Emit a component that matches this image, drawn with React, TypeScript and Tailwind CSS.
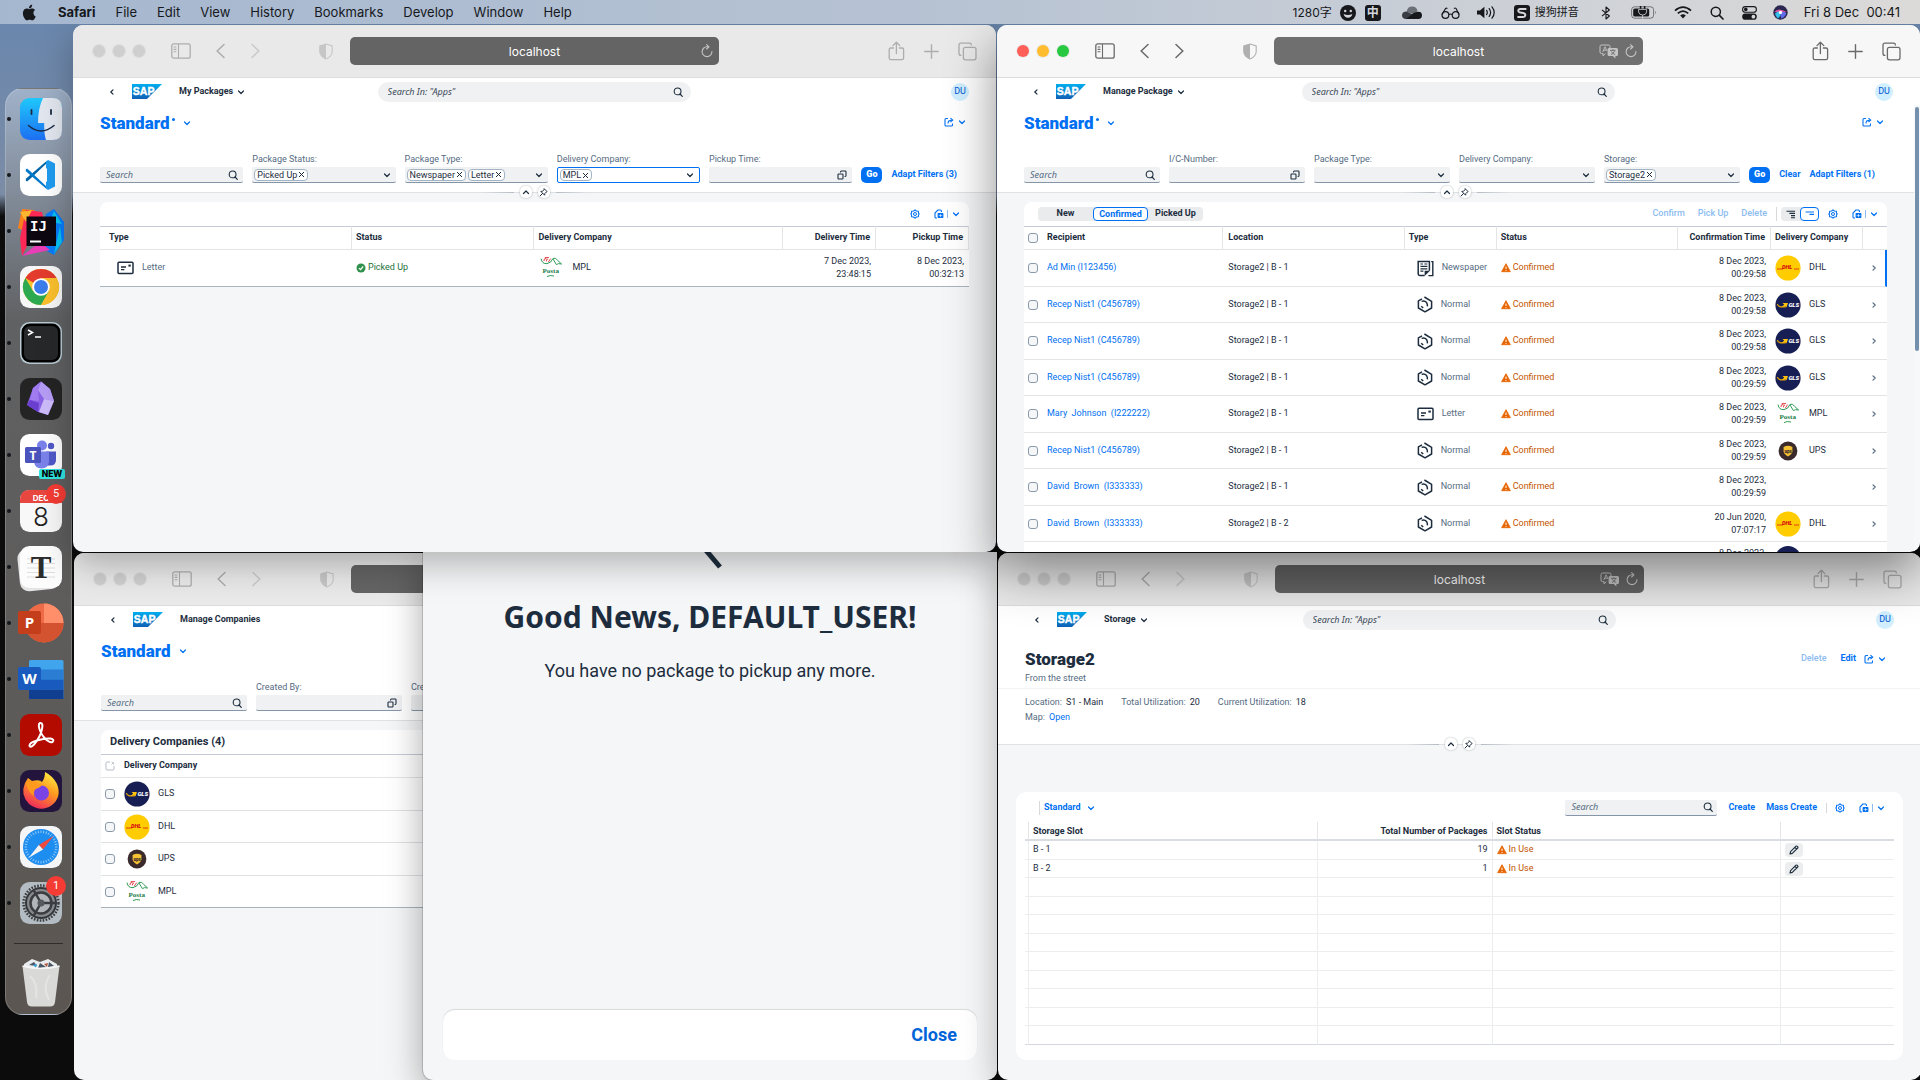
import React, { type ReactNode } from "react";

/* ------------------------------------------------------------------ */
/* Small line icons                                                    */
/* ------------------------------------------------------------------ */

type IconProps = { className?: string };

function Chevron({ className = "", dir = "down" }: IconProps & { dir?: "down" | "up" | "left" | "right" }) {
  const d = {
    down: "M1.5 3 L4 5.5 L6.5 3",
    up: "M1.5 5.5 L4 3 L6.5 5.5",
    left: "M5 1.8 L2.8 4 L5 6.2",
    right: "M3 1.8 L5.2 4 L3 6.2",
  }[dir];
  return (
    <svg viewBox="0 0 8 8" aria-hidden="true" className={"size-2 shrink-0 " + className}>
      <path d={d} fill="none" stroke="currentColor" strokeWidth="1.2" strokeLinecap="round" strokeLinejoin="round" />
    </svg>
  );
}

function SearchIcon({ className = "" }: IconProps) {
  return (
    <svg viewBox="0 0 10 10" aria-hidden="true" className={"size-2.5 shrink-0 " + className}>
      <circle cx="4.6" cy="4.4" r="3.4" fill="none" stroke="currentColor" strokeWidth="1.1" />
      <path d="M7 7 L9.3 9.3" stroke="currentColor" strokeWidth="1.2" strokeLinecap="round" />
    </svg>
  );
}

function ValueHelpIcon() {
  return (
    <svg viewBox="0 0 10 10" aria-hidden="true" className="size-2.5 shrink-0">
      <rect x="1" y="4" width="5" height="5" rx="0.8" fill="none" stroke="currentColor" strokeWidth="1.1" />
      <path d="M3.5 2.6 V2 Q3.5 1 4.5 1 H8.2 Q9 1 9 1.9 V5.6 Q9 6.5 8.2 6.5 H7.6" fill="none" stroke="currentColor" strokeWidth="1.1" />
    </svg>
  );
}

function PinIcon() {
  return (
    <svg viewBox="0 0 10 10" aria-hidden="true" className="size-[9px]">
      <path d="M6 1 L9 4 L8 4.6 L6.5 6.2 L6.2 8 L2 3.8 L3.9 3.5 L5.5 2 Z M4 6 L1.2 8.8" fill="none" stroke="currentColor" strokeWidth="1.1" strokeLinejoin="round" strokeLinecap="round" />
    </svg>
  );
}

function ShareIcon() {
  return (
    <svg viewBox="0 0 10 10" aria-hidden="true" className="size-2.5 shrink-0">
      <path d="M4 1.5 H2 Q1 1.5 1 2.5 V8 Q1 9 2 9 H7.5 Q8.5 9 8.5 8 V6.5" fill="none" stroke="currentColor" strokeWidth="1.1" />
      <path d="M4 6.5 Q4 3.2 7.5 3.2 M6.4 1.2 L8.8 3.2 L6.4 5.2" fill="none" stroke="currentColor" strokeWidth="1.1" strokeLinejoin="round" />
    </svg>
  );
}

function GearIcon() {
  return (
    <svg viewBox="0 0 10 10" aria-hidden="true" className="size-2.5 shrink-0">
      <path d="M5 0.8 L6.4 2 L8.4 2.2 L8.5 4.1 L9.2 5 L8.5 5.9 L8.4 7.8 L6.4 8 L5 9.2 L3.6 8 L1.6 7.8 L1.5 5.9 L0.8 5 L1.5 4.1 L1.6 2.2 L3.6 2 Z" fill="none" stroke="currentColor" strokeWidth="1.1" strokeLinejoin="round" />
      <circle cx="5" cy="5" r="1.5" fill="none" stroke="currentColor" strokeWidth="1" />
    </svg>
  );
}

function ExportIcon() {
  return (
    <svg viewBox="0 0 10 10" aria-hidden="true" className="size-2.5 shrink-0">
      <path d="M3 9 H2 Q1 9 1 8 V4 L3.8 1 H6.5 Q7.4 1 7.4 2 V3" fill="none" stroke="currentColor" strokeWidth="1.1" />
      <rect x="3.6" y="4" width="5.8" height="5" rx="0.8" fill="currentColor" />
      <path d="M6.5 5 V8.2 M4.6 6.6 H8.4" stroke="#fff" strokeWidth="0.6" />
    </svg>
  );
}

function WarningIcon() {
  return (
    <svg viewBox="0 0 10 10" aria-hidden="true" className="size-2.5 shrink-0">
      <path d="M5 0.7 L9.4 8.7 H0.6 Z" fill="#e76500" stroke="#e76500" strokeWidth="0.8" strokeLinejoin="round" />
      <path d="M5 3.6 V6 M5 7 V7.9" stroke="#fff" strokeWidth="1" />
    </svg>
  );
}

function CheckCircleIcon() {
  return (
    <svg viewBox="0 0 10 10" aria-hidden="true" className="size-2.5 shrink-0">
      <circle cx="5" cy="5" r="4.5" fill="#30914c" />
      <path d="M2.9 5.1 L4.5 6.6 L7.2 3.5" fill="none" stroke="#fff" strokeWidth="1.2" />
    </svg>
  );
}

function PencilIcon() {
  return (
    <svg viewBox="0 0 10 10" aria-hidden="true" className="size-2.5">
      <path d="M1 9 L1.6 6.6 L7 1.2 Q7.6 0.7 8.3 1.4 L8.7 1.8 Q9.3 2.4 8.7 3 L3.3 8.4 Z M6 2.4 L7.7 4.1" fill="none" stroke="currentColor" strokeWidth="1.1" strokeLinejoin="round" />
    </svg>
  );
}

/* ------------------------------------------------------------------ */
/* Package type icons and carrier logos                                */
/* ------------------------------------------------------------------ */

function TypeIcon({ type }: { type: string }) {
  if (type === "Letter")
    return (
      <svg viewBox="0 0 17 14" aria-hidden="true" className="h-3.5 w-[17px] shrink-0 text-[#1d2d3e]">
        <rect x="1" y="1.2" width="15" height="11.4" rx="1" fill="none" stroke="currentColor" strokeWidth="1.5" />
        <path d="M4 6 H9 M4 8.6 H7.4" stroke="currentColor" strokeWidth="1.3" />
        <rect x="11.4" y="3.6" width="2.4" height="2" fill="currentColor" />
      </svg>
    );
  if (type === "Newspaper")
    return (
      <svg viewBox="0 0 17 17" aria-hidden="true" className="size-[17px] shrink-0 text-[#1d2d3e]">
        <path d="M7.600 15.400 H2.600 Q1.200 15.400 1.200 14 V1.400 H12.400 V10.800" fill="none" stroke="currentColor" strokeWidth="1.500" />
        <path d="M7.600 16 V10.800 H13 Z" fill="currentColor" />
        <path d="M3.400 4 H6 M7.400 4 H10.400 M3.400 6.400 H10.400 M3.400 8.800 H10.400 M3.400 11.200 H6.400" stroke="currentColor" strokeWidth="1.200" />
        <path d="M14.200 1.600 H15.800 V15.600 H11.400" fill="none" stroke="currentColor" strokeWidth="1.400" />
      </svg>
    );
  return (
    <svg viewBox="0 0 16 17" aria-hidden="true" className="h-[17px] w-4 shrink-0 text-[#1d2d3e]">
      <path d="M5 2.800 L1.400 4.800 V12 L8 15.800 L14.600 12 V5.400 L7.400 1" fill="none" stroke="currentColor" strokeWidth="1.500" strokeLinejoin="round" />
      <path d="M4.600 5.400 Q7.400 4 9.600 6.600 Q10.600 8 10.400 10.400" fill="none" stroke="currentColor" strokeWidth="1.500" />
      <path d="M4.200 10.200 L6.200 12" stroke="currentColor" strokeWidth="1.500" />
    </svg>
  );
}

function CarrierLogo({ name }: { name: string }) {
  return (
    <svg viewBox="0 0 26 26" aria-hidden="true" className="size-[26px] shrink-0">
      {name === "GLS" && (
        <>
          <circle cx="13" cy="13" r="12.6" fill="#171e54" />
          <path d="M2.4 12 Q3 16 11 14.6" fill="none" stroke="#e7a500" strokeWidth="1.2" />
          <path d="M7.5 11 H13 L11.4 15.4 L10.6 14 L6.4 15.2 L9.2 12.6 Z" fill="#ffc20e" />
          <text x="13.4" y="15.4" fontFamily="Roboto" fontWeight="900" fontStyle="italic" fontSize="6" fill="#fff">GLS</text>
        </>
      )}
      {name === "DHL" && (
        <>
          <circle cx="13" cy="13" r="12.6" fill="#ffcc00" />
          <path d="M2 14 H8 M19 14 H24" stroke="#d40511" strokeWidth="0.7" />
          <text x="7" y="14.4" fontFamily="Roboto" fontWeight="900" fontStyle="italic" fontSize="5.600" fill="#d40511">DHL</text>
        </>
      )}
      {name === "UPS" && (
        <>
          <circle cx="13" cy="13" r="9.4" fill="#3b2a2c" />
          <path d="M8.6 9 Q13 6.4 17.4 9 V13.6 Q17.2 16.4 13 18.4 Q8.8 16.4 8.6 13.6 Z" fill="#f5c033" />
          <text x="9.4" y="14.800" fontFamily="Roboto" fontWeight="900" fontSize="4.6" fill="#3b2a2c">ups</text>
        </>
      )}
      {name === "MPL" && (
        <>
          <path d="M3 3.6 Q4 9.2 9 8.6 Q13.4 8 15 3.4 Q18 2.2 19.6 5.4 L23.6 9 Q20 8 18.4 9.6 L15 4" fill="none" stroke="#2f9d57" strokeWidth="1" />
          <path d="M6 6 Q5.6 3.2 8.4 3.4 M8.4 6.4 Q8 4 10 4 M10.4 7 L12.6 3.6 M6.8 2.6 H11" fill="none" stroke="#e4474b" strokeWidth="1" />
          <text x="4.6" y="18.4" fontFamily="Liberation Serif" fontWeight="700" fontSize="7" fill="#167a44">Posta</text>
          <path d="M9 21.6 Q12 19.8 16 21" fill="none" stroke="#2f9d57" strokeWidth="1" />
        </>
      )}
    </svg>
  );
}

function SapLogo({ id }: { id: string }) {
  return (
    <svg viewBox="0 0 30 15" role="img" aria-label="SAP" className="h-[15px] w-[30px] shrink-0">
      <defs>
        <linearGradient id={id} x1="0" y1="0" x2="0" y2="1">
          <stop offset="0" stopColor="#00aeef" />
          <stop offset="1" stopColor="#1060b5" />
        </linearGradient>
      </defs>
      <path d="M0 0 H30 L15 15 H0 Z" fill={`url(#${id})`} />
      <text x="0.8" y="11.400" fontFamily="Liberation Sans" fontWeight="700" fontSize="10.500" stroke="#fff" strokeWidth="0.4" fill="#fff">SAP</text>
    </svg>
  );
}

/* ------------------------------------------------------------------ */
/* Browser window                                                      */
/* ------------------------------------------------------------------ */

function BrowserWindow({
  active = false,
  translate = false,
  className = "",
  children,
}: {
  active?: boolean;
  translate?: boolean;
  className?: string;
  children: ReactNode;
}) {
  const lights = active
    ? ["bg-[#ff5f57]", "bg-[#febc2e]", "bg-[#28c840]"]
    : ["bg-[#cfcfcf]", "bg-[#cfcfcf]", "bg-[#cfcfcf]"];
  const names = ["Close window", "Minimise window", "Zoom window"];
  return (
    <section className={"flex min-h-0 min-w-0 flex-col overflow-hidden rounded-[10px] bg-[#f5f6f7] " + className}>
      <div
        className={
          "grid h-[53px] shrink-0 grid-cols-[1fr_40%_1fr] items-center border-b border-[#dcdcdc] " +
          (active ? "bg-[#f7f7f7] text-[#6a6a6a]" : "bg-[#e9e9e9] text-[#adadad]")
        }
      >
        <div className="flex items-center pl-5">
          <div className="flex gap-2">
            {lights.map((c, i) => (
              <button key={i} aria-label={names[i]} className={"size-3 rounded-full ring-1 ring-black/5 " + c} />
            ))}
          </div>
          <button aria-label="Sidebar" className="ml-[26px]">
            <svg viewBox="0 0 20 16" className="h-4 w-5">
              <rect x="0.8" y="0.8" width="18.4" height="14.4" rx="2" fill="none" stroke="currentColor" strokeWidth="1.3" />
              <path d="M7.5 1 V15 M2.6 4 H5.4 M2.6 6.4 H5.4 M2.6 8.8 H5.4" stroke="currentColor" strokeWidth="1.1" />
            </svg>
          </button>
          <button aria-label="Back" className="ml-[25px]">
            <svg viewBox="0 0 9 16" className="h-4 w-[9px]">
              <path d="M8 1.5 L1.2 8 L8 14.5" fill="none" stroke="currentColor" strokeWidth="1.5" strokeLinecap="round" />
            </svg>
          </button>
          <button aria-label="Forward" className={"ml-[26px] " + (active ? "" : "opacity-50")}>
            <svg viewBox="0 0 9 16" className="h-4 w-[9px]">
              <path d="M1 1.5 L7.8 8 L1 14.5" fill="none" stroke="currentColor" strokeWidth="1.5" strokeLinecap="round" />
            </svg>
          </button>
          <button aria-label="Privacy report" className={"mr-[17px] ml-auto " + (active ? "text-[#b0b0b0]" : "text-[#c6c6c6]")}>
            <svg viewBox="0 0 14 17" className="h-[17px] w-3.5">
              <path d="M7 1 L13.2 3 V9 Q12.8 13.4 7 16 Q1.2 13.4 0.8 9 V3 Z" fill="none" stroke="currentColor" strokeWidth="1.1" />
              <path d="M7 1 L0.8 3 V9 Q1.2 13.4 7 16 Z" fill="currentColor" />
            </svg>
          </button>
        </div>
        <div
          className={
            "relative flex h-7 items-center justify-center rounded-[5px] pt-0.5 font-[Inter,sans-serif] text-[12px] text-white " +
            (active ? "bg-[#6f6f6f]" : "bg-[#646464]")
          }
        >
          localhost
          <div className="absolute inset-y-0 right-1.5 flex items-center gap-1.5 text-[#c4c4c4]">
            {translate && (
              <button aria-label="Translate">
                <svg viewBox="0 0 20 15" className="h-[15px] w-5">
                  <path d="M2.5 1 H9.5 Q11 1 11 2.5 V4 M6.4 9.6 L4 11.8 V9.6 H2.5 Q1 9.6 1 8 V2.5 Q1 1 2.5 1" fill="none" stroke="currentColor" strokeWidth="1" />
                  <path d="M3.8 8 L6 2.8 L8 7 M4.6 6.2 H7" fill="none" stroke="currentColor" strokeWidth="0.9" />
                  <path d="M10 4 H17.5 Q19 4 19 5.5 V10.5 Q19 12 17.5 12 H16.4 V14.4 L13.8 12 H10 Q8.6 12 8.6 10.5 V5.5 Q8.6 4 10 4 Z" fill="currentColor" />
                  <path d="M11 6.4 H16.6 M13.8 5.2 V6.4 M12 10.6 Q15 9.4 15.6 6.6 M12.2 7.4 Q13.4 9.8 16.2 10.6" fill="none" stroke="#6f6f6f" strokeWidth="0.9" />
                </svg>
              </button>
            )}
            <button aria-label="Reload">
              <svg viewBox="0 0 12 14" className="h-3.5 w-3">
                <path d="M10.9 7.6 A4.9 4.9 0 1 1 6 2.8 H7.6 M5.6 0.6 L8 2.8 L5.6 5" fill="none" stroke="currentColor" strokeWidth="1.1" strokeLinecap="round" strokeLinejoin="round" />
              </svg>
            </button>
          </div>
        </div>
        <div className="flex items-center justify-end gap-[19px] pr-[19px]">
          <button aria-label="Share">
            <svg viewBox="0 0 17 20" className="h-5 w-[17px]">
              <path d="M5.4 7 H2.8 Q1.2 7 1.2 8.6 V17 Q1.2 18.6 2.8 18.6 H14 Q15.6 18.6 15.6 17 V8.6 Q15.6 7 14 7 H11.4 M8.4 12.6 V1.4 M5 4.6 L8.4 1.2 L11.8 4.6" fill="none" stroke="currentColor" strokeWidth="1.3" strokeLinecap="round" strokeLinejoin="round" />
            </svg>
          </button>
          <button aria-label="New tab">
            <svg viewBox="0 0 15 15" className="size-[15px]">
              <path d="M7.5 0.8 V14.2 M0.8 7.5 H14.2" stroke="currentColor" strokeWidth="1.4" strokeLinecap="round" />
            </svg>
          </button>
          <button aria-label="Tab overview">
            <svg viewBox="0 0 19 19" className="size-[19px]">
              <rect x="5.4" y="5.4" width="12.6" height="12.4" rx="2" fill="none" stroke="currentColor" strokeWidth="1.3" />
              <path d="M3.4 13.4 H2.8 Q1 13.4 1 11.6 V3 Q1 1.2 2.8 1.2 H11.6 Q13.4 1.2 13.4 3 V3.4" fill="none" stroke="currentColor" strokeWidth="1.3" />
            </svg>
          </button>
        </div>
      </div>
      {children}
    </section>
  );
}

/* ------------------------------------------------------------------ */
/* Application pieces                                                  */
/* ------------------------------------------------------------------ */

const INPUT = "w-0 min-w-0 flex-1 bg-transparent font-['Noto_Sans',sans-serif] text-[9px] italic outline-none placeholder:italic ";

function ShellBar({ title, id, menu = true }: { title: string; id: string; menu?: boolean }) {
  return (
    <header className="grid h-[27px] shrink-0 grid-cols-[1fr_34%_1fr] items-center bg-white">
      <div className="flex items-center pl-[35px]">
        <button aria-label="Navigate back">
          <Chevron dir="left" />
        </button>
        <a href="#home" className="ml-4">
          <SapLogo id={id} />
        </a>
        <button className="ml-[17px] flex items-center gap-1 text-[9px] font-bold">
          {title}
          {menu && <Chevron />}
        </button>
      </div>
      <label className="flex h-5 items-center rounded-full bg-[#eff1f2] pr-2 pl-2.5">
        <input
          aria-label="Search in apps"
          placeholder={'Search In: "Apps"'}
          className={INPUT + "placeholder:text-[#3b4a5a]"}
        />
        <SearchIcon />
      </label>
      <div className="flex justify-end pr-[27px]">
        <button className="size-[18px] rounded-full bg-[#d1efff] text-[9px] text-[#0057d2]">DU</button>
      </div>
    </header>
  );
}

function VariantTitle({ dirty = false }: { dirty?: boolean }) {
  return (
    <h1>
      <button className="flex items-center pt-0.5 text-[17px] leading-6 font-black text-[#0070f2]">
        Standard
        {dirty && <span className="mb-2 ml-0.5 size-[3px] rounded-full bg-[#0070f2]" />}
        <Chevron className="ml-2" />
      </button>
    </h1>
  );
}

function ShareMenu() {
  return (
    <button aria-label="Share" className="flex items-center gap-1 text-[#0070f2]">
      <ShareIcon />
      <Chevron />
    </button>
  );
}

type FieldKind = "search" | "combo" | "help";

function Field({
  id,
  label,
  kind,
  tokens = [],
  focused = false,
  width = "flex-1",
}: {
  id: string;
  label?: string;
  kind: FieldKind;
  tokens?: string[];
  focused?: boolean;
  width?: string;
}) {
  return (
    <div className={"min-w-0 " + width}>
      <label htmlFor={id} className="block h-[15px] text-[9px] leading-[14px] whitespace-nowrap text-[#556b82]">
        {label}
      </label>
      <div
        className={
          "flex h-4 items-center gap-0.5 rounded-[2px] pr-[5px] pl-0.5 " +
          (focused ? "border border-[#0070f2] bg-white" : "border-b border-[#8696a9] bg-[#eff1f2]")
        }
      >
        {tokens.map((t) => (
          <span key={t} className="flex h-3 items-center rounded-[4px] border border-[#a3b4c4] bg-white px-0.5 text-[9px] leading-[10px]">
            {t}
            <button aria-label={"Remove " + t} className="ml-px">
              <svg viewBox="0 0 7 7" className="size-[7px]">
                <path d="M1 1 L6 6 M6 1 L1 6" stroke="currentColor" strokeWidth="1" />
              </svg>
            </button>
          </span>
        ))}
        <input
          id={id}
          aria-label={label ?? "Search"}
          placeholder={kind === "search" ? "Search" : undefined}
          className={INPUT + "pl-1 placeholder:text-[#556b82]"}
        />
        <button aria-label={kind === "search" ? "Search" : "Open list"}>
          {kind === "search" ? <SearchIcon /> : kind === "help" ? <ValueHelpIcon /> : <Chevron />}
        </button>
      </div>
    </div>
  );
}

function HeaderToggles() {
  return (
    <div className="absolute inset-x-0 -bottom-1.5 z-10 flex items-center justify-center gap-1.5">
      <span className="h-px w-8 bg-linear-to-r from-transparent to-[#b5bcc3]" />
      <button aria-label="Collapse header" className="flex size-3 items-center justify-center rounded-[5px] bg-white shadow-[0_0_2px_rgba(34,53,72,0.4)]">
        <Chevron dir="up" />
      </button>
      <button aria-label="Pin header" className="flex size-3 items-center justify-center rounded-[5px] bg-white shadow-[0_0_2px_rgba(34,53,72,0.4)]">
        <PinIcon />
      </button>
      <span className="h-px w-8 bg-linear-to-l from-transparent to-[#b5bcc3]" />
    </div>
  );
}

function ListHeader({
  dirty,
  share = true,
  toggles = true,
  children,
}: {
  dirty?: boolean;
  share?: boolean;
  toggles?: boolean;
  children: ReactNode;
}) {
  return (
    <div className="relative shrink-0 border-b border-[#dfe2e5] bg-white px-[27px] pb-[9px]">
      <div className="flex h-[34px] items-center justify-between pr-[3px]">
        <VariantTitle dirty={dirty} />
        {share && <ShareMenu />}
      </div>
      <div className="mt-[13px] flex items-end gap-[9px] pr-3">{children}</div>
      {toggles && <HeaderToggles />}
    </div>
  );
}

function GoButton() {
  return <button className="h-4 rounded-[5px] bg-[#0070f2] px-[5px] text-[9px] font-black text-white">Go</button>;
}

function TextButton({ children, disabled = false }: { children: ReactNode; disabled?: boolean }) {
  return (
    <button
      disabled={disabled}
      className={"h-4 text-[9px] whitespace-nowrap " + (disabled ? "font-medium text-[#8cbcf0]" : "font-bold text-[#0070f2]")}
    >
      {children}
    </button>
  );
}

function TableActions() {
  return (
    <div className="flex items-center text-[#0070f2]">
      <button aria-label="Settings">
        <GearIcon />
      </button>
      <button aria-label="Export" className="ml-3.5">
        <ExportIcon />
      </button>
      <span className="ml-[3px] h-2 w-px bg-[#8cbcf0]" />
      <button aria-label="Export options" className="ml-1">
        <Chevron />
      </button>
    </div>
  );
}

function Checkbox({ label }: { label: string }) {
  return (
    <input
      type="checkbox"
      aria-label={label}
      className="block size-2.5 appearance-none rounded-[3px] border border-[#8a99a9] bg-[#f4f6f7]"
    />
  );
}

const TH = "h-6 border-t border-b border-t-[#c3ccd5] border-b-[#e5e5e5] text-left text-[9px] font-bold whitespace-nowrap";
const TH_LINE = " border-r border-r-[#e5e5e5]";

/* ------------------------------------------------------------------ */
/* My Packages                                                         */
/* ------------------------------------------------------------------ */

function MyPackages() {
  return (
    <>
      <ShellBar title="My Packages" id="sap-my" />
      <ListHeader dirty>
        <Field id="mp-search" kind="search" />
        <Field id="mp-status" label="Package Status:" kind="combo" tokens={["Picked Up"]} />
        <Field id="mp-type" label="Package Type:" kind="combo" tokens={["Newspaper", "Letter"]} />
        <Field id="mp-company" label="Delivery Company:" kind="combo" tokens={["MPL"]} focused />
        <Field id="mp-time" label="Pickup Time:" kind="help" />
        <GoButton />
        <TextButton>Adapt Filters (3)</TextButton>
      </ListHeader>
      <main className="px-[27px] pt-[9px]">
        <div className="rounded-t-lg bg-white">
          <div className="flex h-6 items-center justify-end pr-[9px]">
            <TableActions />
          </div>
          <table className="w-full table-fixed border-separate border-spacing-0 text-[9px]">
            <colgroup>
              <col className="w-[29%]" />
              <col className="w-[21%]" />
              <col />
              <col className="w-[93px]" />
              <col className="w-[93px]" />
            </colgroup>
            <thead>
              <tr>
                <th className={TH + TH_LINE + " pl-[9px]"}>Type</th>
                <th className={TH + TH_LINE + " pl-1"}>Status</th>
                <th className={TH + TH_LINE + " pl-1"}>Delivery Company</th>
                <th className={TH + TH_LINE}>
                  <div className="pr-[5px] text-right">Delivery Time</div>
                </th>
                <th className={TH + TH_LINE}>
                  <div className="pr-[5px] text-right">Pickup Time</div>
                </th>
              </tr>
            </thead>
            <tbody>
              <tr className="h-[37px] *:border-b *:border-[#a8b3bd]">
                <td className="pl-[17px]">
                  <div className="flex items-center gap-2 text-[#556b82]">
                    <TypeIcon type="Letter" />
                    Letter
                  </div>
                </td>
                <td className="pl-1">
                  <div className="flex items-center gap-0.5 text-[#256f3a]">
                    <CheckCircleIcon />
                    Picked Up
                  </div>
                </td>
                <td className="pl-1">
                  <div className="flex items-center gap-2">
                    <CarrierLogo name="MPL" />
                    MPL
                  </div>
                </td>
                <td className="pr-[5px] text-right leading-[13px]">
                  7 Dec 2023,
                  <br />
                  23:48:15
                </td>
                <td className="pr-[5px] text-right leading-[13px]">
                  8 Dec 2023,
                  <br />
                  00:32:13
                </td>
              </tr>
            </tbody>
          </table>
        </div>
      </main>
    </>
  );
}

/* ------------------------------------------------------------------ */
/* Manage Package                                                      */
/* ------------------------------------------------------------------ */

const packages = [
  { who: "Ad Min (I123456)", slot: "B - 1", type: "Newspaper", day: "8 Dec 2023,", time: "00:29:58", co: "DHL" },
  { who: "Recep Nist1 (C456789)", slot: "B - 1", type: "Normal", day: "8 Dec 2023,", time: "00:29:58", co: "GLS" },
  { who: "Recep Nist1 (C456789)", slot: "B - 1", type: "Normal", day: "8 Dec 2023,", time: "00:29:58", co: "GLS" },
  { who: "Recep Nist1 (C456789)", slot: "B - 1", type: "Normal", day: "8 Dec 2023,", time: "00:29:59", co: "GLS" },
  { who: "Mary  Johnson  (I222222)", slot: "B - 1", type: "Letter", day: "8 Dec 2023,", time: "00:29:59", co: "MPL" },
  { who: "Recep Nist1 (C456789)", slot: "B - 1", type: "Normal", day: "8 Dec 2023,", time: "00:29:59", co: "UPS" },
  { who: "David  Brown  (I333333)", slot: "B - 1", type: "Normal", day: "8 Dec 2023,", time: "00:29:59", co: "" },
  { who: "David  Brown  (I333333)", slot: "B - 2", type: "Normal", day: "20 Jun 2020,", time: "07:07:17", co: "DHL" },
];

function ManagePackage() {
  return (
    <>
      <ShellBar title="Manage Package" id="sap-manage" />
      <div className="relative flex min-h-0 flex-1 flex-col overflow-hidden pr-1.5">
        <ListHeader dirty>
          <Field id="pk-search" kind="search" />
          <Field id="pk-number" label="I/C-Number:" kind="help" />
          <Field id="pk-type" label="Package Type:" kind="combo" />
          <Field id="pk-company" label="Delivery Company:" kind="combo" />
          <Field id="pk-storage" label="Storage:" kind="combo" tokens={["Storage2"]} />
          <GoButton />
          <TextButton>Clear</TextButton>
          <TextButton>Adapt Filters (1)</TextButton>
        </ListHeader>
        <main className="px-[27px] pt-[9px]">
          <div className="rounded-t-lg bg-white">
            <div className="flex h-6 items-center pr-[9px] pl-3.5">
              <div className="flex h-3.5 items-center rounded-[4px] bg-[#e9ebed] text-[9px] font-bold">
                <button className="w-[55px]">New</button>
                <button className="h-3.5 w-[55px] rounded-[4px] border border-[#0070f2] bg-white leading-3 text-[#0070f2]">Confirmed</button>
                <button className="w-[55px]">Picked Up</button>
              </div>
              <div className="ml-auto flex items-center gap-[13px]">
                <TextButton disabled>Confirm</TextButton>
                <TextButton disabled>Pick Up</TextButton>
                <TextButton disabled>Delete</TextButton>
              </div>
              <span className="ml-[9px] h-3.5 w-px bg-[#d9d9d9]" />
              <div className="mr-[9px] ml-1 flex rounded-[4px] bg-[#e9ebed]">
                <button aria-label="Full details" className="flex h-3.5 w-[19px] items-center justify-center">
                  <svg viewBox="0 0 10 9" className="h-[9px] w-2.5">
                    <path d="M0.5 1.2 H9 M3.4 3.4 H9 M5 5.6 H9 M5 7.8 H9" stroke="#1d2d3e" strokeWidth="1.1" />
                  </svg>
                </button>
                <button aria-label="Fewer details" className="flex h-3.5 w-[19px] justify-center rounded-[4px] border border-[#0070f2] bg-white pt-[3px]">
                  <svg viewBox="0 0 10 5" className="h-[5px] w-2.5">
                    <path d="M0.5 1 H9 M4.5 3.4 H9" stroke="#0070f2" strokeWidth="1.2" />
                  </svg>
                </button>
              </div>
              <TableActions />
            </div>
            <table className="w-full table-fixed border-separate border-spacing-0 text-[9px]">
              <colgroup>
                <col className="w-[18px]" />
                <col />
                <col />
                <col className="w-[92px]" />
                <col />
                <col className="w-[93px]" />
                <col className="w-[92px]" />
                <col className="w-6" />
              </colgroup>
              <thead>
                <tr>
                  <th className={TH + " pl-1"}>
                    <Checkbox label="Select all packages" />
                  </th>
                  <th className={TH + TH_LINE + " pl-[5px]"}>Recipient</th>
                  <th className={TH + TH_LINE + " pl-[5px]"}>Location</th>
                  <th className={TH + TH_LINE + " pl-1"}>Type</th>
                  <th className={TH + TH_LINE + " pl-1"}>Status</th>
                  <th className={TH + TH_LINE}>
                    <div className="pr-[5px] text-right">Confirmation Time</div>
                  </th>
                  <th className={TH + TH_LINE + " pl-1"}>Delivery Company</th>
                  <th className={TH} aria-label="Navigation" />
                </tr>
              </thead>
              <tbody>
                {packages.map((p, i) => (
                  <tr key={i} className="*:border-b *:border-b-[#e2e4e6] odd:h-[37px] even:h-9">
                    <td className="pl-1">
                      <Checkbox label={"Select " + p.who} />
                    </td>
                    <td className="pl-[5px]">
                      <a href="#package" className="whitespace-pre text-[#0070f2]">{p.who}</a>
                    </td>
                    <td className="pl-[5px]">Storage2 | {p.slot}</td>
                    <td className="pl-3">
                      <div className="flex items-center gap-2 text-[#556b82]">
                        <TypeIcon type={p.type} />
                        {p.type}
                      </div>
                    </td>
                    <td className="pl-1">
                      <div className="flex items-center gap-0.5 text-[#c35500]">
                        <WarningIcon />
                        Confirmed
                      </div>
                    </td>
                    <td className="pr-[5px] text-right leading-[13px]">
                      {p.day}
                      <br />
                      {p.time}
                    </td>
                    <td className="pl-1">
                      {p.co && (
                        <div className="flex items-center gap-2">
                          <CarrierLogo name={p.co} />
                          {p.co}
                        </div>
                      )}
                    </td>
                    <td className={i === 0 ? "border-r-2 border-r-[#0070f2] pl-[7px]" : "pl-[7px]"}>
                      <Chevron dir="right" className="text-[#556b82]" />
                    </td>
                  </tr>
                ))}
                <tr className="h-9 *:align-top">
                  <td colSpan={5} />
                  <td className="pt-[5px] pr-[5px] text-right leading-[13px]">8 Dec 2023,</td>
                  <td className="pt-1 pl-1">
                    <span className="block size-[26px] rounded-full bg-[#171e54]" />
                  </td>
                  <td />
                </tr>
              </tbody>
            </table>
          </div>
        </main>
        <div className="absolute inset-y-0 right-0 w-1.5 bg-[#f7f8f9]">
          <div className="mt-0.5 ml-px h-[244px] w-1 rounded-full bg-[#7590ad]" />
        </div>
      </div>
    </>
  );
}

/* ------------------------------------------------------------------ */
/* Manage Companies                                                    */
/* ------------------------------------------------------------------ */

function ManageCompanies() {
  return (
    <>
      <header className="flex h-[27px] shrink-0 items-center bg-white pl-[35px]">
        <button aria-label="Navigate back">
          <Chevron dir="left" />
        </button>
        <a href="#home" className="ml-4">
          <SapLogo id="sap-companies" />
        </a>
        <span className="ml-[17px] text-[9px] font-bold">Manage Companies</span>
      </header>
      <ListHeader share={false} toggles={false}>
        <Field id="co-search" kind="search" width="w-[146px]" />
        <Field id="co-by" label="Created By:" kind="help" width="w-[146px]" />
        <Field id="co-on" label="Created On:" kind="help" width="w-[146px]" />
      </ListHeader>
      <main className="px-[27px] pt-[9px]">
        <div className="rounded-t-lg bg-white">
          <h2 className="flex h-6 items-center pl-[9px] text-[11px] font-bold">Delivery Companies (4)</h2>
          <table className="w-full table-fixed border-separate border-spacing-0 text-[9px]">
            <colgroup>
              <col className="w-[18px]" />
              <col />
            </colgroup>
            <thead>
              <tr>
                <th className={TH + " pl-1"} aria-label="Selection">
                  <svg viewBox="0 0 10 10" className="size-2.5 text-[#b6bfc8]">
                    <path d="M5 1 H2 Q1 1 1 2 V8 Q1 9 2 9 H8 Q9 9 9 8 V5 M6.6 1 L9 3.4 M9 1 L6.6 3.4" fill="none" stroke="currentColor" strokeWidth="1" />
                  </svg>
                </th>
                <th className={TH + " pl-[5px]"}>Delivery Company</th>
              </tr>
            </thead>
            <tbody>
              {["GLS", "DHL", "UPS", "MPL"].map((c) => (
                <tr key={c} className="*:border-b *:border-[#dfe2e5] odd:h-[33px] even:h-8 last:*:border-[#a8b3bd]">
                  <td className="pl-1">
                    <Checkbox label={"Select " + c} />
                  </td>
                  <td className="pl-[5px]">
                    <div className="flex items-center gap-2">
                      <CarrierLogo name={c} />
                      {c}
                    </div>
                  </td>
                </tr>
              ))}
            </tbody>
          </table>
        </div>
      </main>
    </>
  );
}

function PickupNotice() {
  return (
    <section className="absolute -top-px right-0 bottom-0 left-[349px] z-10 flex flex-col items-center rounded-b-[10px] bg-[#f5f6f7] shadow-[0_12px_36px_rgba(0,0,0,0.35)] ring-1 ring-black/15">
      <svg viewBox="0 0 34 17" aria-hidden="true" className="h-[17px] w-[34px]">
        <path d="M11 -4 L27 15" stroke="#1d2d3e" strokeWidth="5" />
      </svg>
      <h2 className="mt-7 font-['Noto_Sans',sans-serif] text-[30px] leading-10 font-bold">Good News, DEFAULT_USER!</h2>
      <p className="mt-[22px] text-lg leading-6">You have no package to pickup any more.</p>
      <footer className="mx-5 mt-auto mb-5 flex h-[50px] items-center justify-end self-stretch rounded-xl bg-white px-5 shadow-[0_-1px_1px_rgba(0,0,0,0.12)]">
        <button className="text-lg font-bold text-[#0064d9]">Close</button>
      </footer>
    </section>
  );
}

/* ------------------------------------------------------------------ */
/* Storage                                                             */
/* ------------------------------------------------------------------ */

const slots = [
  { name: "B - 1", total: "19" },
  { name: "B - 2", total: "1" },
  ...Array.from({ length: 9 }, () => ({ name: "", total: "" })),
];

function Fact({ label, children }: { label: string; children: ReactNode }) {
  return (
    <div className="flex gap-1">
      <dt className="text-[#556b82]">{label}</dt>
      <dd>{children}</dd>
    </div>
  );
}

function Storage() {
  return (
    <>
      <ShellBar title="Storage" id="sap-storage" />
      <div className="relative shrink-0 border-b border-[#dfe2e5] bg-white">
        <div className="flex justify-between border-b border-[#f2f3f4] px-[27px] pt-[13px] pb-1">
          <div>
            <h1 className="text-[17px] leading-[26px] font-black">Storage2</h1>
            <p className="text-[9px] leading-3 text-[#556b82]">From the street</p>
          </div>
          <div className="flex h-[26px] items-center gap-3.5 pr-2">
            <TextButton disabled>Delete</TextButton>
            <div className="flex items-center gap-2">
              <TextButton>Edit</TextButton>
              <ShareMenu />
            </div>
          </div>
        </div>
        <dl className="px-[27px] pt-1.5 pb-[19px] text-[9px] leading-[15px]">
          <div className="flex gap-[18px]">
            <Fact label="Location:">S1 - Main</Fact>
            <Fact label="Total Utilization:">20</Fact>
            <Fact label="Current Utilization:">18</Fact>
          </div>
          <Fact label="Map:">
            <a href="#map" className="text-[#0070f2]">Open</a>
          </Fact>
        </dl>
        <HeaderToggles />
      </div>
      <main className="px-[18px] pt-[47px]">
        <div className="rounded-[10px] bg-white px-[9px] pb-[15px]">
          <div className="flex h-[30px] items-center gap-[11px] pt-px pr-[9px] pl-3.5">
            <button className="flex h-3.5 items-center gap-1.5 border-l border-[#d9d9d9] pl-1 text-[9px] font-bold text-[#0070f2]">
              Standard
              <Chevron />
            </button>
            <div className="ml-auto flex h-4 w-[152px] items-center rounded-[2px] border-b border-[#8696a9] bg-[#eff1f2] pr-1 pl-1.5">
              <input aria-label="Search slots" placeholder="Search" className={INPUT + "placeholder:text-[#556b82]"} />
              <SearchIcon />
            </div>
            <TextButton>Create</TextButton>
            <TextButton>Mass Create</TextButton>
            <div className="-ml-0.5 border-l border-[#d9d9d9] pl-2">
              <TableActions />
            </div>
          </div>
          <table className="w-full table-fixed border-separate border-spacing-0 text-[9px]">
            <colgroup>
              <col className="w-1" />
              <col />
              <col className="w-[175px]" />
              <col />
              <col className="w-[113px]" />
            </colgroup>
            <thead>
              <tr className="h-[19px] *:border-b-2 *:border-b-[#d9dde1] *:pt-0.5 *:text-left">
                <th className="border-r border-r-[#e5e5e5]" />
                <th className="border-r border-r-[#e5e5e5] pl-1">Storage Slot</th>
                <th className="border-r border-r-[#e5e5e5]">
                  <div className="pr-1 text-right">Total Number of Packages</div>
                </th>
                <th className="border-r border-r-[#e5e5e5] pl-1">Slot Status</th>
                <th />
              </tr>
            </thead>
            <tbody>
              {slots.map((s, i) => (
                <tr key={i} className="*:border-b *:border-b-[#eceded] odd:h-[19px] even:h-[18px] last:*:border-b-[#d5d9dd]">
                  <td className="border-r border-r-[#eceded]" />
                  <td className="border-r border-r-[#eceded] pl-1">{s.name}</td>
                  <td className="border-r border-r-[#eceded] pr-1 text-right">{s.total}</td>
                  <td className="border-r border-r-[#eceded] pl-1">
                    {s.name && (
                      <div className="flex items-center gap-0.5 text-[#c35500]">
                        <WarningIcon />
                        In Use
                      </div>
                    )}
                  </td>
                  <td className="pl-1">
                    {s.name && (
                      <button aria-label={"Edit " + s.name} className="flex h-3.5 w-[18px] items-center justify-center rounded-[4px] bg-[#ebedee]">
                        <PencilIcon />
                      </button>
                    )}
                  </td>
                </tr>
              ))}
            </tbody>
          </table>
        </div>
      </main>
    </>
  );
}

/* ------------------------------------------------------------------ */
/* Menu bar                                                            */
/* ------------------------------------------------------------------ */

function MenuBar() {
  return (
    <nav className="flex h-6 shrink-0 items-center bg-linear-to-r from-[#a5b7cf] via-[#b7c3d3] to-[#dcdad9] pt-px pr-5 pl-[22px] text-[13px] text-[#16181c]">
      <svg viewBox="0 0 14 17" aria-label="Apple" className="h-[17px] w-3.5">
        <path d="M11.4 9 C11.4 7 13 6.2 13.1 6.1 C12.1 4.7 10.7 4.6 10.2 4.5 C9 4.4 7.9 5.2 7.3 5.2 C6.7 5.2 5.8 4.5 4.8 4.6 C3.5 4.6 2.3 5.3 1.6 6.5 C0.2 8.9 1.2 12.5 2.6 14.4 C3.3 15.4 4.1 16.4 5.1 16.3 C6.1 16.3 6.5 15.7 7.7 15.7 C8.9 15.7 9.2 16.3 10.3 16.3 C11.4 16.3 12.1 15.3 12.7 14.4 C13.3 13.6 13.6 12.6 13.7 12.4 C13.6 12.4 11.4 11.5 11.4 9 Z M9.4 3.2 C9.9 2.5 10.3 1.6 10.2 0.6 C9.4 0.7 8.4 1.2 7.9 1.8 C7.4 2.4 6.9 3.4 7.1 4.3 C8 4.4 8.9 3.8 9.4 3.2 Z" fill="currentColor" />
      </svg>
      <ul className="ml-[22px] flex gap-5">
        {["Safari", "File", "Edit", "View", "History", "Bookmarks", "Develop", "Window", "Help"].map((m, i) => (
          <li key={m}>
            <button className={i === 0 ? "font-bold" : ""}>{m}</button>
          </li>
        ))}
      </ul>
      <div className="ml-auto flex items-center">
        <span className="text-[12px]">1280字</span>
        <svg viewBox="0 0 16 16" aria-label="Emoji" className="ml-2 size-4">
          <circle cx="8" cy="8" r="8" fill="currentColor" />
          <circle cx="5.2" cy="6" r="1.2" fill="#d2d5da" />
          <circle cx="10.8" cy="6" r="1.2" fill="#d2d5da" />
          <path d="M3.6 9 Q8 11 12.4 9 Q11.4 12.8 8 12.8 Q4.6 12.8 3.6 9 Z" fill="#d2d5da" />
        </svg>
        <span className="ml-[9px] flex size-4 items-center justify-center rounded-[3px] bg-[#16181c] text-[12px] font-bold text-[#d2d5da]">中</span>
        <svg viewBox="0 0 20 13" aria-label="Cloud drive" className="ml-[21px] h-[13px] w-5">
          <path d="M4.600 6 Q5.600 0.600 10.200 0.600 Q14.400 0.600 15.600 5 L12 8 Z" fill="#6b6f76" />
          <path d="M0 9.400 Q0 5.600 4.600 5.600 L13 9.400 L8 13 H4 Q0.200 12.600 0 9.400" fill="#3a3d43" />
          <path d="M4 13 L11.600 7 Q19.600 3.600 20 9.200 Q19.800 13 16.600 13 Z" fill="#16181c" />
        </svg>
        <svg viewBox="0 0 19 12" aria-label="Reader" className="ml-[19px] h-3 w-[19px]">
          <circle cx="4.4" cy="8" r="3.4" fill="none" stroke="currentColor" strokeWidth="1.2" />
          <circle cx="14.6" cy="8" r="3.4" fill="none" stroke="currentColor" strokeWidth="1.2" />
          <path d="M7.8 7.6 Q9.5 6.4 11.2 7.6 M1 7.6 L4.6 1.4 Q5.6 0.6 6.4 1.6 M18 7.6 L15 1.4 Q14 0.6 13 1.6" fill="none" stroke="currentColor" strokeWidth="1.1" />
        </svg>
        <svg viewBox="0 0 19 13" aria-label="Volume" className="ml-[17px] h-[13px] w-[19px]">
          <path d="M0 4.4 H3 L7.4 0.8 V12.2 L3 8.6 H0 Z" fill="currentColor" />
          <path d="M9.6 4.4 Q11 6.5 9.6 8.6 M12.2 2.6 Q15 6.5 12.2 10.4 M15 0.8 Q19.4 6.5 15 12.2" fill="none" stroke="currentColor" strokeWidth="1.2" strokeLinecap="round" />
        </svg>
        <svg viewBox="0 0 16 16" aria-label="Input method" className="ml-[18px] size-4">
          <rect width="16" height="16" rx="3" fill="currentColor" />
          <path d="M12.4 4 H6.4 Q4 4.2 4.4 6.2 Q4.8 7.4 8 7.8 Q11.8 8.4 11.2 10.4 Q10.8 12 9 12 H3.4" fill="none" stroke="#d6d7da" strokeWidth="2" />
        </svg>
        <span className="ml-[5px] text-[11px]">搜狗拼音</span>
        <svg viewBox="0 0 10 14" aria-label="Bluetooth" className="ml-[22px] h-3.5 w-2.5">
          <path d="M1 3.8 L8.4 10 L5 13 V1 L8.4 4 L1 10.2" fill="none" stroke="currentColor" strokeWidth="1.1" strokeLinejoin="round" />
        </svg>
        <svg viewBox="0 0 26 13" aria-label="Battery" className="ml-[20px] h-[13px] w-[26px]">
          <rect x="0.6" y="0.8" width="22" height="11.4" rx="3" fill="none" stroke="currentColor" strokeOpacity="0.5" />
          <rect x="2.2" y="2.4" width="16" height="8.2" rx="1.6" fill="currentColor" />
          <path d="M9.6 0 V3 M13.600 0 V3" stroke="currentColor" strokeWidth="1.600" />
          <path d="M7.600 3.400 H15.600 V6 Q15.200 9 11.600 9 Q8 9 7.600 6 Z M11.600 9 V13" fill="currentColor" stroke="#d6d7da" strokeWidth="0.800" />
          <path d="M24 4.6 Q25.6 6.5 24 8.4 Z" fill="currentColor" fillOpacity="0.5" />
        </svg>
        <svg viewBox="0 0 18 13" aria-label="Wi-Fi" className="ml-[17px] h-[13px] w-[18px]">
          <path d="M1 4.6 Q9 -2.4 17 4.6 M3.8 7.4 Q9 2.8 14.2 7.4" fill="none" stroke="currentColor" strokeWidth="1.8" />
          <path d="M6.2 9.4 Q9 7 11.8 9.4 L9 12.4 Z" fill="currentColor" />
        </svg>
        <svg viewBox="0 0 14 14" aria-label="Spotlight" className="ml-[18px] size-3.5">
          <circle cx="5.8" cy="5.8" r="4.6" fill="none" stroke="currentColor" strokeWidth="1.5" />
          <path d="M9.2 9.2 L13 13" stroke="currentColor" strokeWidth="1.7" strokeLinecap="round" />
        </svg>
        <svg viewBox="0 0 15 14" aria-label="Control centre" className="ml-[18px] h-3.5 w-[15px]">
          <rect x="0.6" y="0.6" width="13.8" height="5.6" rx="2.8" fill="none" stroke="currentColor" strokeWidth="1.1" />
          <circle cx="3.8" cy="3.4" r="1.8" fill="currentColor" />
          <rect x="0.2" y="7.6" width="14.6" height="6.2" rx="3.1" fill="currentColor" />
          <circle cx="11.4" cy="10.7" r="1.9" fill="#d8d8da" />
        </svg>
        <svg viewBox="0 0 15 15" aria-label="Siri" className="ml-4 size-[15px]">
          <circle cx="7.5" cy="7.5" r="7.2" fill="#2b2750" />
          <path d="M1.4 7 Q5 2 13.6 7 Q9 8 7.5 7.5 Z" fill="#e0529c" />
          <path d="M2 8.4 Q6 5.4 7.6 7.4 Q9 10 5 13.4 Q2.6 11.6 2 8.4" fill="#35c0ec" />
          <path d="M7.4 7 Q13 6 13.2 9 Q11 13 8 13.6 Z" fill="#5f6be8" />
          <circle cx="7.5" cy="7.4" r="1.7" fill="#fff" />
        </svg>
        <time className="ml-4 whitespace-pre">Fri 8 Dec  00:41</time>
      </div>
    </nav>
  );
}

/* ------------------------------------------------------------------ */
/* Dock                                                                */
/* ------------------------------------------------------------------ */

function Tile({ fill }: { fill: string }) {
  return <rect width="42" height="42" rx="9.5" fill={fill} />;
}

function OfficeMark({ letter, color }: { letter: string; color: string }) {
  return (
    <>
      <rect x="-2" y="9" width="23" height="23" rx="2" fill={color} />
      <text x="9.5" y="26" textAnchor="middle" fontFamily="Open Sans" fontWeight="700" fontSize="15" fill="#fff">{letter}</text>
    </>
  );
}

const rosette = Array.from({ length: 36 }, (_, i) => i * 10);

const dockApps: { name: string; art: ReactNode; badge?: string }[] = [
  {
    name: "Finder",
    art: (
      <>
        <defs>
          <linearGradient id="fi" x1="0" y1="0" x2="0" y2="1">
            <stop offset="0" stopColor="#1fc8fb" />
            <stop offset="1" stopColor="#1d6ff2" />
          </linearGradient>
        </defs>
        <Tile fill="url(#fi)" />
        <path d="M23 0 H32.5 Q42 0 42 9.500 V32.500 Q42 42 32.500 42 H26 Q24 36 24.200 25 H18 Q18 10 23 0 Z" fill="#e3e7ef" />
        <path d="M11.500 12 V16 M31 12 V16" stroke="#1b2b45" strokeWidth="1.800" strokeLinecap="round" />
        <path d="M8.500 27.500 Q21 38.500 34 27.500" fill="none" stroke="#1b2b45" strokeWidth="1.500" strokeLinecap="round" />
      </>
    ),
  },
  {
    name: "Visual Studio Code",
    art: (
      <>
        <Tile fill="#fff" />
        <path d="M28 8 L10 25 L7 27.500 L5.800 26.500 V24.800 L26 7.500 Z" fill="#0065a9" />
        <path d="M28 34 L10 17 L7 14.500 L5.800 15.500 V17.200 L26 34.500 Z" fill="#007acc" />
        <path d="M28 6 L35 9.400 V32.600 L28 36 L26 34.500 V7.500 Z" fill="#1f9cf0" />
        <path d="M27 14 L18 21 L27 28 Z" fill="#fff" />
      </>
    ),
  },
  {
    name: "IntelliJ IDEA",
    art: (
      <>
        <path d="M2 -1 L14 0 L23 12 L10 24 L-2 18 Z" fill="#fc801d" />
        <path d="M6 0 L22 2 L26 20 L8 34 L2 46 L0 28 Z" fill="#fe2857" />
        <path d="M26 4 L34 -1 L44 12 L44 30 L34 45 L18 36 Z" fill="#087cfa" />
        <path d="M34 1 L42 14 L30 12 Z M40 16 L42 32 L34 44 Z" fill="#07c3f2" />
        <path d="M2 46 L20 32 L30 40 Z" fill="#e83fb8" />
        <path d="M0 2 L12 0 L6 12 Z" fill="#fdb62f" />
        <path d="M6.500 6.500 H36 V36 H6.500 Z" fill="#0c0710" />
        <text x="10" y="21" fontFamily="DejaVu Sans Mono" fontWeight="700" fontSize="14" fill="#fff">IJ</text>
        <path d="M10 31.500 H21" stroke="#fff" strokeWidth="2" />
      </>
    ),
  },
  {
    name: "Chrome",
    art: (
      <>
        <Tile fill="#f7f7f7" />
        <circle cx="21" cy="21" r="18" fill="#fbc02d" />
        <path d="M21 21 L5.400 12 A18 18 0 0 1 36.600 12 Z" fill="#e33b2e" />
        <path d="M5.400 12 A18 18 0 0 0 21 39 L28.800 25.500 L21 21 L13.200 25.500 Z" fill="#2da94f" />
        <path d="M21 12 H36.600 A18 18 0 0 1 21 39 L28.800 25.500 Z" fill="#fbc02d" />
        <circle cx="21" cy="21" r="8.800" fill="#fff" />
        <circle cx="21" cy="21" r="7" fill="#3b7ded" />
      </>
    ),
  },
  {
    name: "Terminal",
    art: (
      <>
        <Tile fill="#b8cad2" />
        <rect x="1.500" y="1.500" width="39" height="39" rx="8.500" fill="#000" />
        <rect x="4" y="4" width="34" height="34" rx="6" fill="#262829" />
        <path d="M8 8 L12.500 10.500 L8 13" fill="none" stroke="#fff" strokeWidth="1.500" />
        <path d="M15 15 H21" stroke="#fff" strokeWidth="1.500" />
      </>
    ),
  },
  {
    name: "Obsidian",
    art: (
      <>
        <Tile fill="#242424" />
        <path d="M21 3.500 L30 11 L34 23 L28 37 L18 34 L7 27 L13 10 Z" fill="#8c63e6" />
        <path d="M21 3.500 L30 11 L34 23 L24 21 L18 12 Z" fill="#b79df5" />
        <path d="M13 10 L21 3.500 L18 12 L19 23 L10 22 Z" fill="#a07cf0" />
        <path d="M24 21 L34 23 L28 37 L19 34 Z" fill="#cdbcfa" />
        <path d="M10 22 L19 25 L18 34 L7 27 Z" fill="#6a3fd0" />
      </>
    ),
  },
  {
    name: "Teams",
    art: (
      <>
        <Tile fill="#fff" />
        <circle cx="31" cy="12" r="3.200" fill="#5059c9" />
        <circle cx="22" cy="11.500" r="5" fill="#7b83eb" />
        <path d="M26 17.500 H36 V26 Q36 31.500 30 31.500 H26 Z" fill="#5059c9" />
        <path d="M14 17.500 H29 V28 Q28 34.500 21.500 34.500 Q15 34.500 14 28 Z" fill="#7b83eb" />
        <rect x="5" y="13" width="16" height="16" rx="1.500" fill="#4b53bc" />
        <text x="13" y="25.500" textAnchor="middle" fontFamily="Open Sans" fontWeight="700" fontSize="12" fill="#fff">T</text>
        <rect x="19" y="35" width="26" height="10" rx="2" fill="#31e6df" />
        <text x="32" y="43" textAnchor="middle" fontFamily="Inter" fontWeight="800" fontSize="8.500" fill="#000">NEW</text>
      </>
    ),
  },
  {
    name: "Calendar",
    badge: "5",
    art: (
      <>
        <Tile fill="#f8f8f8" />
        <path d="M0 13 V9.500 Q0 0 9.500 0 H32.500 Q42 0 42 9.500 V13 Z" fill="#e8473f" />
        <text x="21" y="10.500" textAnchor="middle" fontFamily="Inter" fontWeight="700" fontSize="8" fill="#fff">DEC</text>
        <text x="21" y="35.500" textAnchor="middle" fontFamily="Inter" fontWeight="300" fontSize="26" fill="#222">8</text>
      </>
    ),
  },
  {
    name: "Typora",
    art: (
      <>
        <rect x="-1.500" y="2" width="40" height="42" rx="9" fill="#e4e4e4" transform="rotate(-6 20 22)" />
        <Tile fill="#fcfcfc" />
        <path d="M7 13 H35 M7 17.500 H35 M7 22 H35 M7 26.500 H35 M7 31 H35" stroke="#dedede" strokeWidth="1" />
        <text x="21" y="31.500" textAnchor="middle" fontFamily="Liberation Serif" fontWeight="700" fontSize="31" fill="#2c2c2c">T</text>
      </>
    ),
  },
  {
    name: "PowerPoint",
    art: (
      <>
        <circle cx="24" cy="21" r="19.500" fill="#ed6c47" />
        <path d="M24 1.500 A19.500 19.500 0 0 1 43.500 21 H24 Z" fill="#ff8f6b" />
        <path d="M4.500 21 H43.500 A19.500 19.500 0 0 1 4.500 21 Z" fill="#d35230" />
        <OfficeMark letter="P" color="#c43e1c" />
      </>
    ),
  },
  {
    name: "Word",
    art: (
      <>
        <rect x="9" y="2" width="34.500" height="39" rx="1.500" fill="#41a5ee" />
        <rect x="9" y="11.500" width="34.500" height="10" fill="#2b7cd3" />
        <rect x="9" y="21.500" width="34.500" height="10" fill="#185abd" />
        <rect x="9" y="31.500" width="34.500" height="9.500" fill="#103f91" />
        <OfficeMark letter="W" color="#185abd" />
      </>
    ),
  },
  {
    name: "Acrobat",
    art: (
      <>
        <Tile fill="#b30b00" />
        <path d="M20 9 Q23.500 8.500 22 15 Q20.500 23 14 30.500 Q10 34.500 9.500 31.500 Q9.500 28.500 17 26.500 Q25 24 30.500 24.500 Q35 25.500 32.500 28 Q29.500 29 24.500 24 Q19.500 18 18.800 12 Q18.800 9.500 20 9 Z" fill="none" stroke="#fff" strokeWidth="2" />
      </>
    ),
  },
  {
    name: "Firefox",
    art: (
      <>
        <defs>
          <linearGradient id="ff" x1="0.8" y1="0" x2="0.3" y2="1">
            <stop offset="0" stopColor="#fff044" />
            <stop offset="0.450" stopColor="#ff9a1f" />
            <stop offset="1" stopColor="#f0265f" />
          </linearGradient>
        </defs>
        <Tile fill="#22143d" />
        <path d="M25 2 Q33 6 37 14 Q42 27 32 35 Q21 43 9 34 Q0 25 5 13 L8 8 L12 11 Q20 9 22 12 Q25 8 25 2 Z" fill="url(#ff)" />
        <circle cx="21.500" cy="23" r="7.500" fill="#7a43e6" />
        <path d="M6 13 Q12 9 19 14 L22 15 Q20 18 17 18.500 Q12 20 14 26 Q8 22 6 13 Z" fill="#ff9a1f" />
      </>
    ),
  },
  {
    name: "Safari",
    art: (
      <>
        <Tile fill="#f4f5f7" />
        <circle cx="21" cy="21" r="18" fill="#1e8df0" />
        {rosette.map((a) => (
          <path key={a} d="M21 4.500 V7" stroke="#d9eefe" strokeWidth="0.600" transform={`rotate(${a} 21 21)`} />
        ))}
        <path d="M33.500 10 L23 23.500 L18.800 19 Z" fill="#f04a3e" />
        <path d="M8.500 32 L18.800 19 L23 23.500 Z" fill="#f4f4f4" />
      </>
    ),
  },
  {
    name: "System Settings",
    badge: "1",
    art: (
      <>
        <Tile fill="#b4bcc3" />
        <circle cx="21" cy="21" r="17.500" fill="none" stroke="#3a3c3f" strokeWidth="2.500" strokeDasharray="1.600 1.400" />
        <circle cx="21" cy="21" r="15" fill="#85898d" stroke="#34363a" strokeWidth="2" />
        <circle cx="21" cy="21" r="10.500" fill="#b1b5b9" stroke="#3a3c3f" strokeWidth="2.500" />
        <path d="M21 21 L36 21 M21 21 L13.500 8 M21 21 L13.500 34" stroke="#3a3c3f" strokeWidth="2.500" />
        <circle cx="21" cy="21" r="3.500" fill="#55585c" />
      </>
    ),
  },
];

function Dock() {
  return (
    <aside className="flex w-[73px] shrink-0 flex-col justify-center pb-0.5 pl-[5px]">
      <div className="w-[67px] rounded-[18px] border border-white/20 bg-linear-to-b from-[#9fb1c9] from-0% via-[#606163] via-25% to-[#5b5651] pt-[9px] pb-1.5">
        <ul className="flex flex-col gap-3.5 pl-px">
          {dockApps.map((a) => (
            <li key={a.name} className="flex items-center gap-[9px]">
              <span className="size-1 rounded-full bg-[#14171c]" />
              <button aria-label={a.name} className="relative size-[42px]">
                <svg viewBox="0 0 42 42" className="size-[42px] overflow-visible">
                  {a.art}
                </svg>
                {a.badge && (
                  <span className="absolute -top-1.5 -right-1 flex size-5 items-center justify-center rounded-full bg-[#f43c34] text-[11px] text-white">
                    {a.badge}
                  </span>
                )}
              </button>
            </li>
          ))}
        </ul>
        <hr className="mx-2 mt-[19px] mb-3.5 border-[#2f2d2c]" />
        <button aria-label="Bin" className="ml-3.5 block">
          <svg viewBox="0 0 42 50" className="h-[50px] w-[42px]">
            <path d="M4 6 L12 1 L20 4 L28 1 L37 6 V11 H4 Z" fill="#e9ebec" />
            <path d="M9 7 L14 4 L17 8 Z M20 5 L26 9 L18 10 Z M29 4 L34 8 L28 9 Z" fill="#4a5563" />
            <path d="M13 7 L17 6 L16 10 Z" fill="#3aa6d8" />
            <path d="M24 6 L28 5 L27 9 Z" fill="#b3563b" />
            <path d="M2.500 8 Q21 13 39.500 8 L35 44 Q34.500 48.500 30 48.500 H12 Q7.500 48.500 7 44 Z" fill="#d9d9d8" />
            <path d="M2.500 8 Q21 13 39.500 8" fill="none" stroke="#f6f6f6" strokeWidth="1.500" />
            <path d="M10 18 Q18 24 16 40 M30 17 Q22 28 29 42" fill="none" stroke="#e4e4e3" strokeWidth="2" />
          </svg>
        </button>
      </div>
    </aside>
  );
}

/* ------------------------------------------------------------------ */

export default function App() {
  return (
    <div className="flex h-screen min-h-[900px] flex-col overflow-hidden bg-linear-to-b from-[#6a87ad] from-2% via-[#7b8ca6] via-18% to-[#0c0c0d] to-20% font-[Roboto,'Noto_Sans_CJK_SC',sans-serif] text-[#1d2d3e]">
      <div className="relative z-20 font-[Inter,'Noto_Sans_CJK_SC',sans-serif]">
        <MenuBar />
      </div>
      <div className="flex min-h-0 flex-1 pt-px">
        <Dock />
        <div className="grid min-w-0 flex-1 grid-rows-2 gap-px">
          <div className="relative z-10 grid min-h-0 grid-cols-2 gap-px">
            <BrowserWindow className="shadow-[0_12px_36px_rgba(0,0,0,0.28)]">
              <MyPackages />
            </BrowserWindow>
            <BrowserWindow active translate className="relative z-10 shadow-[0_20px_50px_rgba(0,0,0,0.45)]">
              <ManagePackage />
            </BrowserWindow>
          </div>
          <div className="relative z-0 -mr-px grid min-h-0 grid-cols-2 gap-px pl-px">
            <div className="relative flex min-h-0 min-w-0">
              <BrowserWindow className="flex-1">
                <ManageCompanies />
              </BrowserWindow>
              <PickupNotice />
            </div>
            <BrowserWindow translate className="relative z-20 shadow-[0_12px_36px_rgba(0,0,0,0.28)]">
              <Storage />
            </BrowserWindow>
          </div>
        </div>
      </div>
    </div>
  );
}
